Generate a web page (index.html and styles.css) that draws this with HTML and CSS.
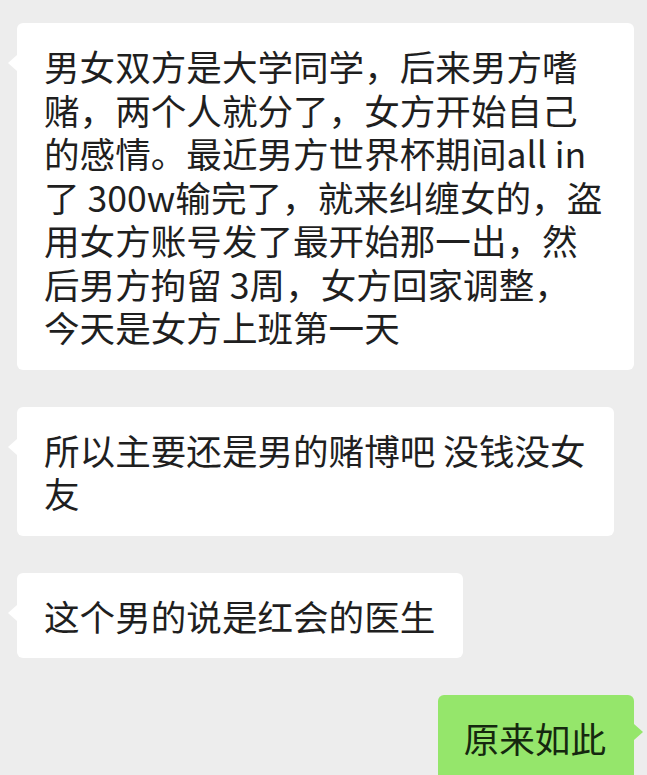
FILE: index.html
```html
<!DOCTYPE html>
<html lang="zh-CN">
<head>
  <meta charset="UTF-8">
  <title>聊天记录</title>
  <link rel="stylesheet" href="styles.css">
</head>
<body>

  <div class="chat">
    <div class="msg msg-in msg-wide">
      男女双方是大学同学，后来男方嗜<br>
      赌，两个人就分了，女方开始自己<br>
      的感情。最近男方世界杯期间all in<br>
      了 300w输完了，就来纠缠女的，盗<br>
      用女方账号发了最开始那一出，然<br>
      后男方拘留 3周，女方回家调整，<br>
      今天是女方上班第一天
    </div>

    <div class="msg msg-in">
      所以主要还是男的赌博吧 没钱没女<br>
      友
    </div>

    <div class="msg msg-in">这个男的说是红会的医生</div>

    <div class="msg msg-out">原来如此</div>
  </div>

</body>
</html>
```

FILE: styles.css
```css
body {
  margin: 0;
  background: #ededed;
  font-family: "Noto Sans CJK SC", "Noto Sans", sans-serif;
  color: #1f1f1f;
  height: 775px;
  overflow: hidden;
}

.chat {
  display: flex;
  flex-direction: column;
  align-items: flex-start;
  gap: 37px;
  padding: 23px 13px 0 17px;
}

.msg {
  position: relative;
  box-sizing: border-box;
  padding: 21px 28px 21px 27px;
  font-size: 35.6px;
  line-height: 43.5px;
  border-radius: 6px;
  background: #fff;
}

.msg-wide {
  width: 617px;
}

/* хвостик слева */
.msg-in::before {
  content: "";
  position: absolute;
  left: -9px;
  top: 32px;
  border-top: 8px solid transparent;
  border-bottom: 8px solid transparent;
  border-right: 9px solid #fff;
}

.msg-out {
  align-self: flex-end;
  background: #95e66b;
  color: #15280f;
  padding-left: 26px;
}

.msg-out::after {
  content: "";
  position: absolute;
  right: -9px;
  top: 29px;
  border-top: 8px solid transparent;
  border-bottom: 8px solid transparent;
  border-left: 9px solid #95e66b;
}
```
